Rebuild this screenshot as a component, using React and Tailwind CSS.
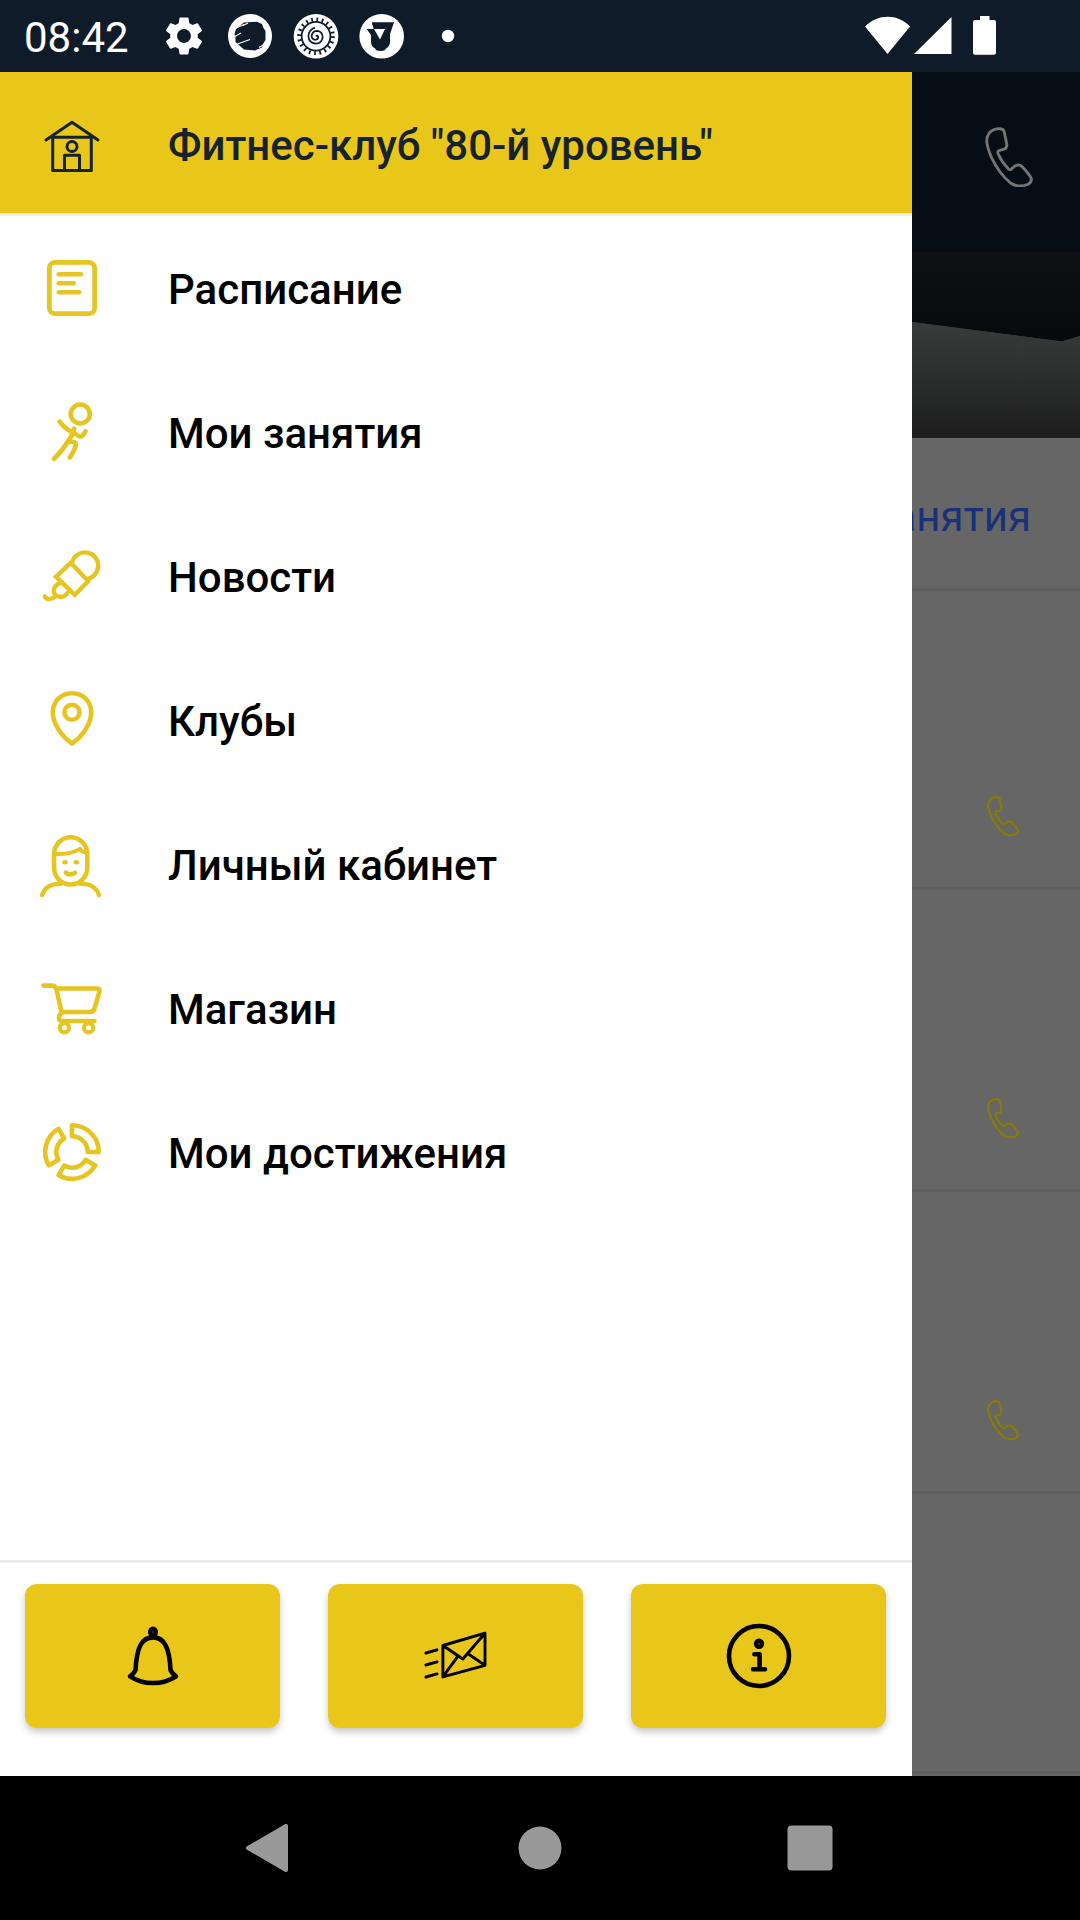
import React from 'react';
import { MdSettings } from 'react-icons/md';

function Icon({ children, width = 4.6, className = '' }) {
  return (
    <svg
      className={`h-[72px] w-[72px] shrink-0 ${className}`}
      viewBox="0 0 72 72"
      fill="none" stroke="currentColor" strokeWidth={width}
      strokeLinecap="round" strokeLinejoin="round"
    >
      {children}
    </svg>
  );
}

const menu = [
  {
    label: 'Расписание',
    icon: (
      <Icon>
        <rect x="13.3" y="10.3" width="45.4" height="51.4" rx="6" strokeWidth="4.8" />
        <path d="M22.7 22.3H45M22.7 31.3h15M22.7 40.3h20.6" />
      </Icon>
    ),
  },
  {
    label: 'Мои занятия',
    icon: (
      <Icon>
        <circle cx="44.3" cy="18" r="9.5" />
        <path d="M23.7 25.6Q28 32 36.5 36.5M38.3 32.5Q37 39 32.5 44.5Q27 54 18 62.8" />
        <path d="M37 36L42.5 40Q45.5 41 47 39.3L49.6 35.2" />
        <path d="M33 46Q40 45 39.8 48.5Q39.5 53 33.8 61.5" />
      </Icon>
    ),
  },
  {
    label: 'Новости',
    icon: (
      <Icon width={4.4}>
        <path d="M36 22.5A13.3 13.3 0 1 1 52.5 38.5" />
        <path d="M34.7 22.8L52.3 41.3L38.8 54.8L20 36.7Z" strokeLinejoin="miter" />
        <path d="M24 43C15.5 46.5 16 56.5 24 56.8Q29.5 57 32.3 51.7M8.8 56.5C10.5 60 17.5 59.5 19 56" />
      </Icon>
    ),
  },
  {
    label: 'Клубы',
    icon: (
      <Icon>
        <path d="M36 9.2C47 9.2 55.2 17.5 55.2 28.5C55.2 40 46 52.5 36 59.5C26 52.5 16.8 40 16.8 28.5C16.8 17.5 25 9.2 36 9.2Z" />
        <circle cx="36" cy="28.3" r="7.5" />
      </Icon>
    ),
  },
  {
    label: 'Личный кабинет',
    icon: (
      <Icon>
        <rect x="18.1" y="9.2" width="33.2" height="47.3" rx="16.6" ry="17" />
        <path d="M18.3 25.7Q34 27 44 20.8Q45.5 24.3 50.5 24.5" strokeWidth="3.9" />
        <ellipse cx="29" cy="34.3" rx="2.8" ry="2.2" fill="currentColor" stroke="none" />
        <ellipse cx="40.3" cy="34.3" rx="2.8" ry="2.2" fill="currentColor" stroke="none" />
        <path d="M29.8 44.8Q34.4 48 39 44.8" />
        <path d="M6 67.2C8.5 59.5 15 55.6 25 56M63 67.2C60.5 59.5 54 55.6 44.5 56" strokeWidth="4.2" />
      </Icon>
    ),
  },
  {
    label: 'Магазин',
    icon: (
      <Icon>
        <path d="M7.4 13.6H16Q19.500 13.6 20.5 17.5L25.5 40M20 16.5H61Q64.3 16.5 63.5 19.5L58.5 36.5Q57.5 40 53.5 40H27Q23 42 23 45.5Q23 49 26.5 49H58.5" />
        <circle cx="28.4" cy="55.7" r="4.6" strokeWidth="4.2" />
        <circle cx="52.6" cy="55.7" r="4.6" strokeWidth="4.2" />
      </Icon>
    ),
  },
  {
    label: 'Мои достижения',
    icon: (
      <Icon>
        {[0, 120, 240].map((deg) => (
          <path
            key={deg}
            transform={`rotate(${deg} 36 36)`}
            d="M36 9.2A26.8 26.8 0 0 1 62.8 36H51.7A15.7 15.7 0 0 0 36 20.3Z"
          />
        ))}
      </Icon>
    ),
  },
];

const actions = [
  {
    label: 'Уведомления',
    icon: (
      <Icon width={4.6}>
        <ellipse cx="36" cy="12" rx="2.7" ry="3.1" />
        <path d="M36 17.4C24.5 17.4 19.5 28 18.6 50Q17 53.5 13 56.3Q23 63 36 63Q49 63 59 56.3Q55 53.5 53.5 50C52.5 28 47.5 17.4 36 17.4Z" />
      </Icon>
    ),
  },
  {
    label: 'Письмо',
    icon: (
      <Icon width={2.9}>
        <path d="M22.9 25.5L65 13.2V45.3L22.9 56.9ZM22.9 25.5L42.8 39L65 13.2M22.9 56.9L37 37.3M65 45.3L49 34.5" />
        <path d="M5.9 33L17 29.8M5.9 45L17 41.9M5.9 57L17 53.9" />
      </Icon>
    ),
  },
  {
    label: 'Информация',
    icon: (
      <Icon width={4.6}>
        <circle cx="36" cy="36" r="30" />
        <circle cx="36" cy="23.8" r="2.9" />
        <path d="M31.4 34.3H36.6V49.3M30 49.3H42" />
      </Icon>
    ),
  },
];

function Handset({ className, width }) {
  return (
    <svg className={className} viewBox="0 0 48 60" fill="none" stroke="currentColor" strokeWidth={width} strokeLinejoin="round">
      <path d="M8.500 2.800Q12 1.500 15.500 1.700Q18.500 2 19.300 5L21.600 16.500Q22.500 21 19 22.200L14.500 23.300Q12 24.200 13.200 27Q17 35.500 23.500 42Q25 43.300 26.600 42L29.500 39.300Q33.500 36.800 37 39.500Q42 44.500 45.300 49.500Q48 54 43.500 57Q34 61.500 25.500 56Q14 46.500 6.500 30.500Q2 20 1.700 14Q2 6 8.500 2.800Z" />
    </svg>
  );
}

function StatusBar() {
  return (
    <div className="flex h-18 items-center bg-[#101b2a] pl-6 pr-[72px] text-white">
      <span className="w-[136px] pt-[3px] text-[42px] leading-none">08:42</span>
      <div className="flex items-center gap-[18px]">
        <MdSettings className="h-12 w-12 p-px" />
        <svg className="h-12 w-12" viewBox="0 0 48 48">
          <circle cx="24" cy="24" r="22" fill="currentColor" />
          <path d="M14 13.500L18 10.500L31 9.800L36 12L37.500 16L39.500 19V28L37 32L36 35.500L29 38.500L18 37.500L14 34L9.500 30V26L8.500 22L10 17Z" fill="#101b2a" />
          <path d="M9 16.500l9-4M8 25l7-4M10 32.500l14-5M17 13.500l5-2.500M33 35.500l5-3" stroke="currentColor" strokeWidth="1.300" />
        </svg>
        <svg className="h-12 w-12" viewBox="0 0 48 48" fill="none" stroke="#101b2a">
          <circle cx="24" cy="24.300" r="22.300" fill="#fff" stroke="none" />
          <circle cx="24" cy="24.300" r="16.800" strokeWidth="4" strokeDasharray="1.700 3.577" />
          <circle cx="24" cy="24.300" r="14.400" strokeWidth="1.800" />
          <path d="M24 24.500q1.500-2 2.200.3q0 3-3 3q-4-.8-3.500-4.500q1-4.500 5.500-4.500q5.500.8 5.500 6.500q-1 6-7 6.300q-7-.8-7.300-7.500q.5-6.500 6.500-8.500" strokeWidth="1.700" />
        </svg>
        <svg className="h-12 w-12" viewBox="0 0 48 48">
          <circle cx="23.700" cy="24.300" r="22.300" fill="currentColor" />
          <path d="M13.700 10.300H36L32 22V30Q32 34 28 36.500Q27 39 22.500 39Q18 39 17 36.500Q13 34 13 30V23L8.700 17H15.700Z" fill="#101b2a" />
          <path d="M16 17H27L22 27.500Z" fill="currentColor" />
        </svg>
        <svg className="h-12 w-12" viewBox="0 0 48 48">
          <circle cx="24" cy="24" r="6.200" fill="currentColor" />
        </svg>
      </div>
      <div className="ml-auto flex">
        <svg className="h-12 w-12" viewBox="0 0 48 48" fill="currentColor">
          <path d="M1 14.500C14 1.500 33.500 1.500 46 14.500L23.500 42Z" />
        </svg>
        <svg className="h-12 w-12" viewBox="0 0 48 48" fill="currentColor">
          <path d="M2 42H39.500V5Z" />
        </svg>
        <svg className="h-12 w-12" viewBox="0 0 48 48" fill="currentColor">
          <path d="M20 4h9.500v4H34q2 0 2 2V40.700q0 2-2 2H15q-2 0-2-2V10q0-2 2-2h5Z" />
        </svg>
      </div>
    </div>
  );
}

function Drawer() {
  return (
    <aside className="flex w-[912px] shrink-0 flex-col bg-white">
      <header className="flex h-36 items-center border-b-[3px] border-[#f5ebdf] bg-[#e8c61a] pl-9 pt-[5px] text-[#17232b]">
        <Icon width={3}>
          <path d="M10 31L36 13.300L62 31" />
          <path d="M16.700 28.300H55.300V61.500H16.700ZM28.500 61.500V46.300H43.500V61.500" />
          <circle cx="36" cy="37.500" r="5" />
        </Icon>
        <h1 className="ml-[60px] pt-[2px] text-[42px] font-medium leading-none">Фитнес-клуб "80-й уровень"</h1>
      </header>
      <nav className="flex flex-1 flex-col">
        {menu.map((item) => (
          <a key={item.label} className="flex h-36 items-center pl-9 text-[#e6c522]">
            {item.icon}
            <span className="ml-[60px] pt-[3px] text-[42px] font-medium leading-none text-black">{item.label}</span>
          </a>
        ))}
      </nav>
      <footer className="flex h-[216px] gap-12 border-t-[3px] border-[#ebeceb] pl-[25px] pr-[26px] pt-[21px]">
        {actions.map((a) => (
          <button
            key={a.label}
            aria-label={a.label}
            className="flex h-36 flex-1 items-center justify-center rounded-xl bg-[#e8c61a] text-black shadow-[0_4px_7px_rgba(0,0,0,0.22)]"
          >
            {a.icon}
          </button>
        ))}
      </footer>
    </aside>
  );
}

function DimmedPage() {
  return (
    <main className="flex w-[168px] flex-col overflow-hidden bg-[#666]">
      <div className="flex h-[180px] shrink-0 justify-end bg-[#060d15] pr-[47px] pt-[55px] text-[#747474]">
        <Handset className="h-[60px] w-12" width={2.900} />
      </div>
      <svg className="h-[186px] w-[168px] shrink-0" viewBox="0 0 168 186">
        <defs>
          <linearGradient id="wall" x2="0" y2="1">
            <stop stopColor="#0f1114" />
            <stop offset="1" stopColor="#08090c" />
          </linearGradient>
          <linearGradient id="floor" x2="0" y2="1">
            <stop stopColor="#3a3c3c" />
            <stop offset="1" stopColor="#1d1d1d" />
          </linearGradient>
        </defs>
        <path d="M0 70L150 89.500L168 84V186H0Z" fill="url(#floor)" />
        <path d="M0 0H168V84L150 89.500L0 70Z" fill="url(#wall)" />
      </svg>
      <div className="flex h-[153px] shrink-0 items-center justify-end border-b-[3px] border-[#5f5f5f] pr-[49px] pt-[8px]">
        <span className="text-[42px] leading-none text-[#1a3178]">занятия</span>
      </div>
      <div className="flex h-[299px] shrink-0 justify-end border-b-[3px] border-[#5f5f5f] pr-[61px] pt-[205px] text-[#8a7a0a]">
        <Handset className="h-10 w-8" width={3.200} />
      </div>
      {[0, 1].map((i) => (
        <div key={i} className="flex h-[302px] shrink-0 justify-end border-b-[3px] border-[#5f5f5f] pr-[61px] pt-[208px] text-[#8a7a0a]">
          <Handset className="h-10 w-8" width={3.200} />
        </div>
      ))}
      <div className="h-[280px] shrink-0 border-b-[3px] border-[#5f5f5f]" />
    </main>
  );
}

export default function App() {
  return (
    <div className="flex h-[1920px] w-[1080px] flex-col overflow-hidden bg-black font-[Roboto,'Noto_Sans',sans-serif]">
      <StatusBar />
      <div className="flex h-[1704px]">
        <Drawer />
        <DimmedPage />
      </div>
      <div className="flex h-36 items-center justify-center gap-[222px] bg-black text-[#999]">
        <svg className="h-12 w-12" viewBox="0 0 48 48" fill="currentColor" stroke="currentColor" strokeWidth="4" strokeLinejoin="round">
          <path d="M2 24L40 2V46Z" />
        </svg>
        <svg className="h-12 w-12" viewBox="0 0 48 48" fill="currentColor">
          <circle cx="24" cy="24" r="21.500" />
        </svg>
        <svg className="h-12 w-12" viewBox="0 0 48 48" fill="currentColor">
          <rect x="1.500" y="1.500" width="45" height="45" rx="4" />
        </svg>
      </div>
    </div>
  );
}
